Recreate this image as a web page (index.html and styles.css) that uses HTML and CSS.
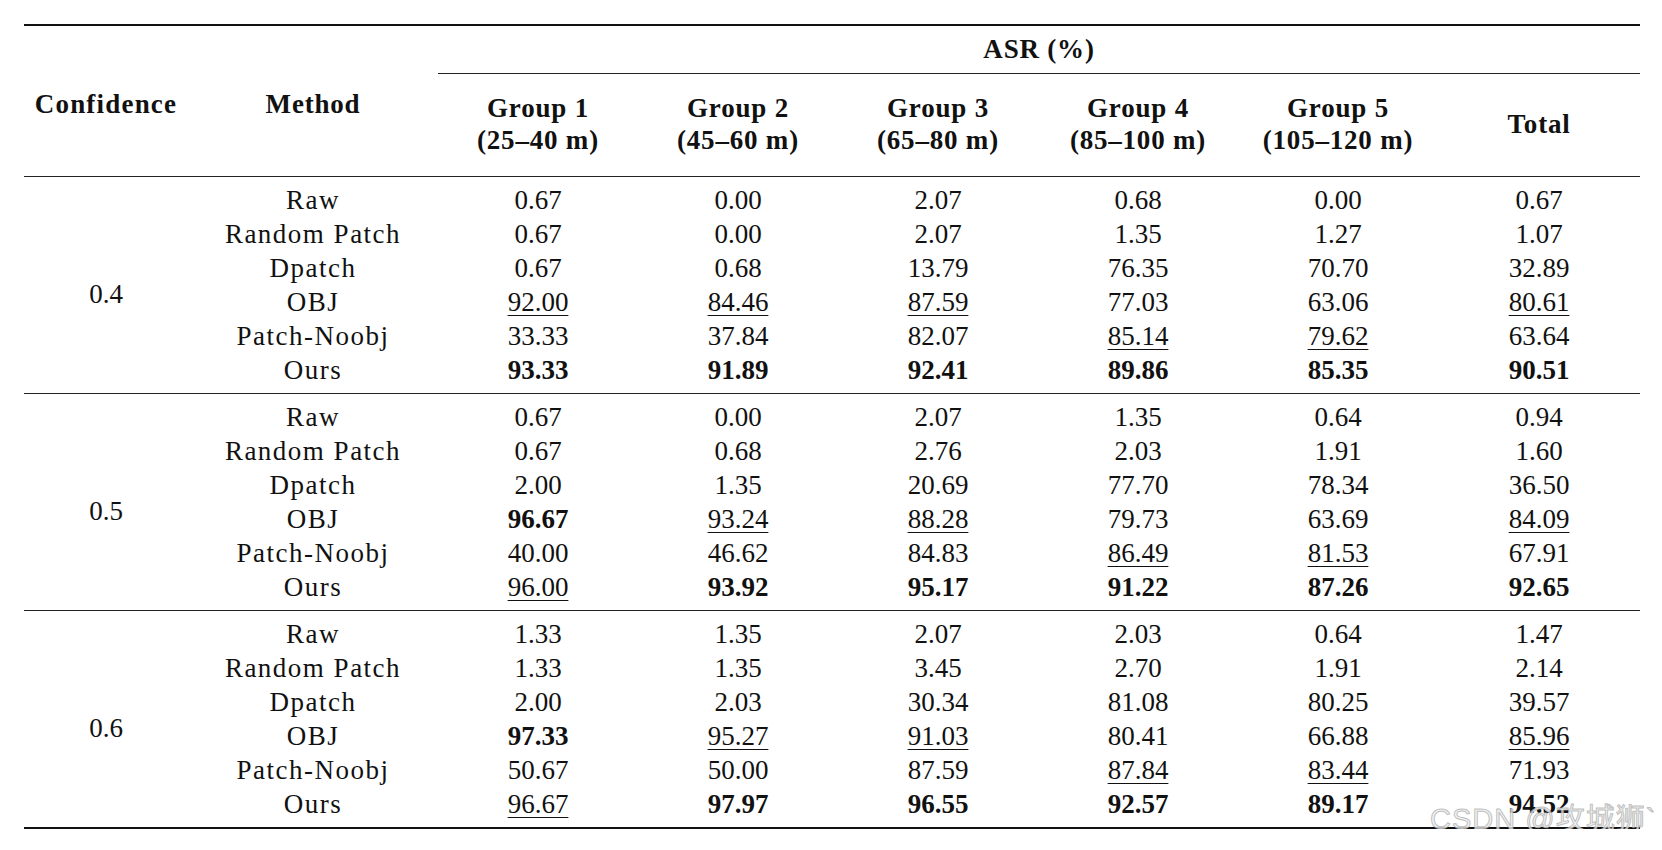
FILE: index.html
```html
<!DOCTYPE html>
<html lang="en">
<head>
<meta charset="utf-8">
<title>ASR table</title>
<link rel="stylesheet" href="styles.css">
</head>
<body>
<div class="page">
<table class="tbl">
  <colgroup>
    <col class="c-conf"><col class="c-meth"><col class="c-grp"><col class="c-grp"><col class="c-grp"><col class="c-grp"><col class="c-grp"><col class="c-tot">
  </colgroup>
  <thead>
    <tr class="h1">
      <th rowspan="2" class="hconf">Confidence</th>
      <th rowspan="2" class="hmeth">Method</th>
      <th colspan="6" class="asr">ASR (%)</th>
    </tr>
    <tr class="h2">
      <th>Group 1<br>(25–40 m)</th>
      <th>Group 2<br>(45–60 m)</th>
      <th>Group 3<br>(65–80 m)</th>
      <th>Group 4<br>(85–100 m)</th>
      <th>Group 5<br>(105–120 m)</th>
      <th>Total</th>
    </tr>
  </thead>
  <tbody class="sec">
    <tr class="first"><td rowspan="6" class="conf">0.4</td><td class="m">Raw</td><td>0.67</td><td>0.00</td><td>2.07</td><td>0.68</td><td>0.00</td><td>0.67</td></tr>
    <tr><td class="m">Random Patch</td><td>0.67</td><td>0.00</td><td>2.07</td><td>1.35</td><td>1.27</td><td>1.07</td></tr>
    <tr><td class="m">Dpatch</td><td>0.67</td><td>0.68</td><td>13.79</td><td>76.35</td><td>70.70</td><td>32.89</td></tr>
    <tr><td class="m">OBJ</td><td><u>92.00</u></td><td><u>84.46</u></td><td><u>87.59</u></td><td>77.03</td><td>63.06</td><td><u>80.61</u></td></tr>
    <tr><td class="m">Patch-Noobj</td><td>33.33</td><td>37.84</td><td>82.07</td><td><u>85.14</u></td><td><u>79.62</u></td><td>63.64</td></tr>
    <tr class="last"><td class="m">Ours</td><td><b>93.33</b></td><td><b>91.89</b></td><td><b>92.41</b></td><td><b>89.86</b></td><td><b>85.35</b></td><td><b>90.51</b></td></tr>
  </tbody>
  <tbody class="sec">
    <tr class="first"><td rowspan="6" class="conf">0.5</td><td class="m">Raw</td><td>0.67</td><td>0.00</td><td>2.07</td><td>1.35</td><td>0.64</td><td>0.94</td></tr>
    <tr><td class="m">Random Patch</td><td>0.67</td><td>0.68</td><td>2.76</td><td>2.03</td><td>1.91</td><td>1.60</td></tr>
    <tr><td class="m">Dpatch</td><td>2.00</td><td>1.35</td><td>20.69</td><td>77.70</td><td>78.34</td><td>36.50</td></tr>
    <tr><td class="m">OBJ</td><td><b>96.67</b></td><td><u>93.24</u></td><td><u>88.28</u></td><td>79.73</td><td>63.69</td><td><u>84.09</u></td></tr>
    <tr><td class="m">Patch-Noobj</td><td>40.00</td><td>46.62</td><td>84.83</td><td><u>86.49</u></td><td><u>81.53</u></td><td>67.91</td></tr>
    <tr class="last"><td class="m">Ours</td><td><u>96.00</u></td><td><b>93.92</b></td><td><b>95.17</b></td><td><b>91.22</b></td><td><b>87.26</b></td><td><b>92.65</b></td></tr>
  </tbody>
  <tbody class="sec end">
    <tr class="first"><td rowspan="6" class="conf">0.6</td><td class="m">Raw</td><td>1.33</td><td>1.35</td><td>2.07</td><td>2.03</td><td>0.64</td><td>1.47</td></tr>
    <tr><td class="m">Random Patch</td><td>1.33</td><td>1.35</td><td>3.45</td><td>2.70</td><td>1.91</td><td>2.14</td></tr>
    <tr><td class="m">Dpatch</td><td>2.00</td><td>2.03</td><td>30.34</td><td>81.08</td><td>80.25</td><td>39.57</td></tr>
    <tr><td class="m">OBJ</td><td><b>97.33</b></td><td><u>95.27</u></td><td><u>91.03</u></td><td>80.41</td><td>66.88</td><td><u>85.96</u></td></tr>
    <tr><td class="m">Patch-Noobj</td><td>50.67</td><td>50.00</td><td>87.59</td><td><u>87.84</u></td><td><u>83.44</u></td><td>71.93</td></tr>
    <tr class="last"><td class="m">Ours</td><td><u>96.67</u></td><td><b>97.97</b></td><td><b>96.55</b></td><td><b>92.57</b></td><td><b>89.17</b></td><td><b>94.52</b></td></tr>
  </tbody>
</table>
<div class="watermark">CSDN @攻城狮`</div>
</div>
</body>
</html>
```

FILE: styles.css
```css
html, body {
  margin: 0;
  padding: 0;
  background: #ffffff;
}

.page {
  position: relative;
  padding: 24px 22px 0 24px;
  width: 1616px;
}

.tbl {
  border-collapse: collapse;
  table-layout: fixed;
  width: 1616px;
  font-family: "Liberation Serif", "Times New Roman", serif;
  font-size: 27px;
  color: #111111;
}

.c-conf { width: 164px; }
.c-meth { width: 250px; }
.c-grp { width: 200px; }
.c-tot { width: 202px; }

.tbl th,
.tbl td {
  padding: 0;
  text-align: center;
  font-weight: normal;
  white-space: nowrap;
}

.tbl th {
  font-weight: bold;
  letter-spacing: 0.8px;
}

.h1 {
  border-top: 2px solid #111;
}

.h1 th {
  vertical-align: middle;
}

.h1 .asr {
  height: 45px;
  border-bottom: 1px solid #222;
  line-height: 32px;
  padding-bottom: 2px;
}

.h1 .hconf,
.h1 .hmeth {
  padding-top: 6px;
}

.h1 .hconf {
  letter-spacing: 1.2px;
}

.h2 th {
  height: 100px;
  line-height: 32px;
  vertical-align: middle;
  padding-bottom: 2px;
}

.sec {
  border-top: 1px solid #222;
}

.sec.end {
  border-bottom: 2px solid #111;
}

.sec td {
  line-height: 34px;
  height: 34px;
}

.sec td.m {
  letter-spacing: 1.5px;
}

.sec tr.first td {
  padding-top: 6px;
}

.sec tr.last td {
  padding-bottom: 6px;
}

.sec tr.first td.conf {
  vertical-align: middle;
  padding-top: 24px;
  padding-bottom: 6px;
}

.tbl b {
  font-weight: bold;
}

.tbl u {
  text-decoration: underline;
  text-decoration-thickness: 1px;
  text-underline-offset: 4px;
}

.watermark {
  position: absolute;
  left: 1430px;
  top: 795px;
  font-family: "Liberation Sans", "Noto Sans CJK SC", sans-serif;
  font-size: 29px;
  letter-spacing: 1px;
  color: rgba(238, 238, 238, 0.8);
  -webkit-text-stroke: 1px rgba(160, 160, 160, 0.65);
  white-space: nowrap;
}
```
